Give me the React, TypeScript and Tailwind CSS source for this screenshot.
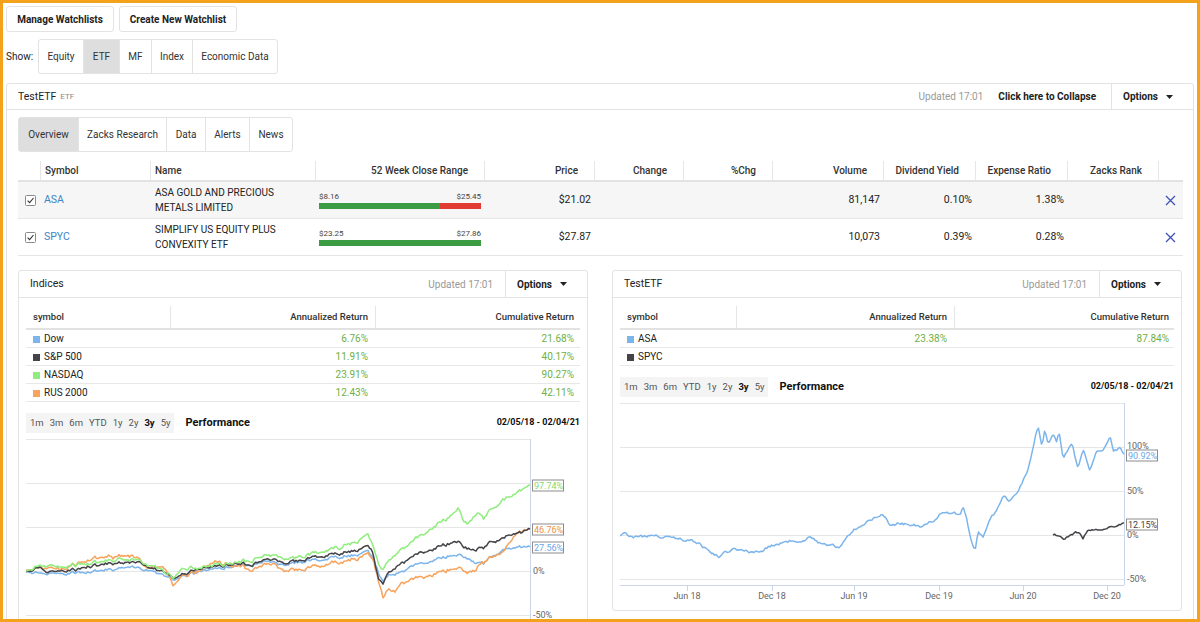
import React from 'react';

type Pt = [number, number];

const HC = { blue: '#7cb5ec', black: '#434348', green: '#90ed7d', orange: '#f7a35c' };

// deterministic noise so the chart lines look the same on every load
function makeRand(seed: number) {
  let a = seed >>> 0;
  return () => {
    a = (a + 0x6d2b79f5) >>> 0;
    let t = a;
    t = Math.imul(t ^ (t >>> 15), t | 1);
    t ^= t + Math.imul(t ^ (t >>> 7), t | 61);
    return ((t ^ (t >>> 14)) >>> 0) / 4294967296;
  };
}

function makeNoise(seed: number, n = 420) {
  const r = makeRand(seed);
  const out: number[] = [];
  let v = 0;
  for (let i = 0; i < n; i++) {
    v = v * 0.55 + (r() - 0.5) * 2;
    out.push(v);
  }
  return out;
}

function yAt(keys: Pt[], x: number) {
  for (let i = 1; i < keys.length; i++) {
    const [x0, y0] = keys[i - 1];
    const [x1, y1] = keys[i];
    if (x <= x1) return y0 + ((y1 - y0) * (x - x0)) / (x1 - x0 || 1);
  }
  return keys[keys.length - 1][1];
}

function linePath(keys: Pt[], ox: number, oy: number, noise: number[], amp: number) {
  const start = keys[0][0];
  const end = keys[keys.length - 1][0];
  const parts: string[] = [];
  let i = 0;
  for (let x = start; x < end; x += 1.5, i++) {
    const y = yAt(keys, x) + (i === 0 ? 0 : noise[i] * amp);
    parts.push(`${(x - ox).toFixed(1)},${(y - oy).toFixed(1)}`);
  }
  parts.push(`${(end - ox).toFixed(1)},${(keys[keys.length - 1][1] - oy).toFixed(1)}`);
  return 'M' + parts.join('L');
}

function mix(a: number[], b: number[], k: number) {
  return a.map((v, i) => v + b[i] * k);
}

// key points in page coordinates, taken off the screenshot
const nasdaq: Pt[] = [
  [26, 569], [40, 563], [60, 565], [100, 560], [120, 557], [140, 558], [147, 562], [155, 565], [173, 575], [180, 568],
  [200, 565], [230, 561], [250, 558], [275, 553], [285, 558], [300, 555], [340, 545], [368, 534], [372, 540],
  [378, 560], [382, 570], [387, 561], [400, 548], [417, 537], [433, 525], [447, 517], [458, 505], [463, 518],
  [468, 522], [477, 510], [483, 518], [490, 508], [503, 498], [513, 493], [523, 488], [530, 483],
];
const sp500: Pt[] = [
  [26, 570], [40, 565], [48, 571], [70, 568], [100, 563], [130, 560], [140, 560], [150, 565], [173, 575], [200, 566],
  [230, 563], [250, 562], [275, 557], [285, 562], [300, 558], [340, 551], [368, 545], [372, 548], [378, 575],
  [383, 583], [387, 573], [395, 565], [417, 553], [433, 547], [458, 538], [463, 545], [470, 548], [483, 547],
  [490, 540], [503, 536], [513, 532], [523, 530], [530, 527],
];
const dow: Pt[] = [
  [26, 570], [50, 572], [90, 570], [130, 565], [150, 568], [173, 577], [200, 569], [230, 565], [275, 560], [285, 564],
  [300, 560], [340, 555], [368, 550], [372, 553], [380, 575], [383, 580], [390, 573], [400, 570], [417, 563],
  [433, 558], [458, 552], [468, 558], [483, 562], [490, 555], [503, 548], [513, 546], [530, 545],
];
const rus: Pt[] = [
  [26, 568], [40, 565], [60, 568], [90, 557], [110, 555], [130, 554], [140, 557], [147, 565], [165, 567], [173, 582],
  [180, 575], [200, 568], [215, 560], [230, 563], [250, 567], [275, 562], [285, 570], [300, 568], [340, 560],
  [368, 553], [373, 557], [380, 585], [383, 597], [387, 590], [395, 588], [400, 582], [417, 577], [433, 572],
  [458, 565], [468, 572], [483, 562], [490, 555], [503, 550], [510, 540], [517, 532], [523, 530], [530, 527],
];

const asa: Pt[] = [
  [620, 535], [625, 532], [633, 536], [653, 535], [680, 537], [700, 543], [708, 551], [720, 555], [733, 548],
  [747, 551], [757, 551], [773, 545], [787, 540], [800, 540], [810, 537], [827, 545], [840, 545], [847, 537],
  [853, 530], [863, 523], [873, 517], [883, 513], [890, 523], [900, 522], [920, 525], [933, 520], [940, 513],
  [950, 512], [960, 513], [963, 505], [967, 520], [972, 543], [975, 552], [978, 533], [983, 537], [990, 520],
  [997, 508], [1003, 495], [1010, 500], [1018, 490], [1023, 480], [1028, 468], [1033, 445], [1038, 425],
  [1042, 445], [1045, 427], [1048, 443], [1053, 435], [1057, 443], [1059, 430], [1063, 457], [1072, 443],
  [1078, 467], [1083, 450], [1090, 470], [1097, 450], [1103, 450], [1110, 435], [1113, 450], [1120, 448], [1124, 453],
];
const spyc: Pt[] = [
  [1053, 534], [1060, 536], [1063, 538], [1072, 534], [1075, 530], [1080, 533], [1083, 537], [1087, 530],
  [1100, 528], [1110, 526], [1124, 522],
];

const market = makeNoise(11);

type Series = { color: string; d: string };
type Flag = { y: number; text: string; color: string };

const indicesSeries: Series[] = [
  { color: HC.blue, d: linePath(dow, 26, 436, mix(market, makeNoise(3), 0.35), 1.3) },
  { color: HC.orange, d: linePath(rus, 26, 436, mix(market, makeNoise(5), 0.4), 1.7) },
  { color: HC.black, d: linePath(sp500, 26, 436, mix(market, makeNoise(7), 0.35), 1.4) },
  { color: HC.green, d: linePath(nasdaq, 26, 436, mix(market, makeNoise(9), 0.4), 1.6) },
];
const etfSeries: Series[] = [
  { color: HC.blue, d: linePath(asa, 620, 401, makeNoise(21), 1.4) },
  { color: HC.black, d: linePath(spyc, 620, 401, makeNoise(23), 0.9) },
];

function PerfChart({
  series,
  flags,
  ticks,
  yLabels,
}: {
  series: Series[];
  flags: Flag[];
  ticks: [number, string][];
  yLabels: [number, string][];
}) {
  const grid = [1, 45, 89, 133, 177];
  return (
    <svg width="556" height="200" className="block mt-[5px]" fontFamily="Roboto, 'Liberation Sans', sans-serif">
      {grid.map((y) => (
        <line key={y} x1="0" x2="504" y1={y + 0.5} y2={y + 0.5} stroke="#e6e6e6" />
      ))}
      <line x1="504.5" x2="504.5" y1="1" y2="183" stroke="#ccd6eb" />
      <line x1="0" x2="504" y1="183.5" y2="183.5" stroke="#ccd6eb" />
      {ticks.map(([x, label]) => (
        <g key={label}>
          <line x1={x + 0.5} x2={x + 0.5} y1="183" y2="189" stroke="#ccd6eb" />
          <text x={x} y="197" textAnchor="middle" fontSize="9" fill="#666">
            {label}
          </text>
        </g>
      ))}
      {yLabels.map(([y, label]) => (
        <text key={label} x="507" y={y + 3} fontSize="9" fill="#666">
          {label}
        </text>
      ))}
      {series.map((s) => (
        <path key={s.color} d={s.d} fill="none" stroke={s.color} strokeWidth="1.5" strokeLinejoin="round" />
      ))}
      {flags.map((f) => (
        <g key={f.text}>
          <rect x="506.5" y={f.y - 5} width="31" height="11" fill="#fff" stroke="#8c8c8c" />
          <text x="508" y={f.y + 3.5} fontSize="9" fill={f.color}>
            {f.text}
          </text>
        </g>
      ))}
    </svg>
  );
}

function Caret() {
  return (
    <svg width="7" height="4" viewBox="0 0 7 4">
      <path d="M0 0h7L3.5 4z" fill="#222" />
    </svg>
  );
}

function Checkbox() {
  return (
    <svg width="11" height="11" viewBox="0 0 11 11">
      <rect x="0.5" y="0.5" width="10" height="10" rx="1" fill="#fff" stroke="#8a8a8a" />
      <path d="M2.6 5.6l2 2 3.9-4.6" fill="none" stroke="#333" strokeWidth="1.1" />
    </svg>
  );
}

function RemoveIcon() {
  return (
    <svg width="11" height="11" viewBox="0 0 11 11">
      <path d="M1 1l9 9M10 1l-9 9" stroke="#3f51b5" strokeWidth="1.3" />
    </svg>
  );
}

function OptionsButton() {
  return (
    <div className="h-full border-l border-[#e3e3e3] flex items-center gap-[8px] pl-[11px] pr-[20px] font-bold text-[#222]">
      Options
      <Caret />
    </div>
  );
}

const holdings = [
  { sym: 'ASA', name: ['ASA GOLD AND PRECIOUS', 'METALS LIMITED'], low: '$8.16', high: '$25.45', pct: 74.7, price: '$21.02', volume: '81,147', div: '0.10%', exp: '1.38%' },
  { sym: 'SPYC', name: ['SIMPLIFY US EQUITY PLUS', 'CONVEXITY ETF'], low: '$23.25', high: '$27.86', pct: 100, price: '$27.87', volume: '10,073', div: '0.39%', exp: '0.28%' },
];

const mainCols = 'grid grid-cols-[22px_110px_165px_169px_110px_89px_89px_111px_92px_92px_91px_25px]';
const mainHeaders = ['52 Week Close Range', 'Price', 'Change', '%Chg', 'Volume', 'Dividend Yield', 'Expense Ratio', 'Zacks Rank'];

function HoldingsTable() {
  return (
    <div className="mt-[9px] w-[1165px]">
      <div className={`${mainCols} h-[21px] border-b-2 border-[#e2e2e2] font-medium text-[#333]`}>
        <div />
        <div className="border-l border-[#e6e6e6] flex items-center pl-[4px]">Symbol</div>
        <div className="border-l border-[#e6e6e6] flex items-center pl-[4px]">Name</div>
        {mainHeaders.map((h) => (
          <div key={h} className="border-l border-[#e6e6e6] flex items-center justify-end pr-[16px]">
            {h}
          </div>
        ))}
        <div className="border-l border-[#e6e6e6]" />
      </div>
      {holdings.map((r, i) => (
        <div key={r.sym} className={`${mainCols} h-[37px] border-b border-[#e6e6e6] ${i === 0 ? 'bg-[#f6f6f6]' : 'bg-white'}`}>
          <div className="flex items-center pl-[7px]">
            <Checkbox />
          </div>
          <div className="flex items-center pl-[4px] text-[10.5px] text-[#3d85c6]">{r.sym}</div>
          <div className="flex flex-col justify-center pl-[5px] leading-[15px] text-[#222]">
            <span>{r.name[0]}</span>
            <span>{r.name[1]}</span>
          </div>
          <div className="flex flex-col justify-center pl-[4px] pr-[3px]">
            <div className="flex justify-between text-[8px] text-[#444] leading-[10px]">
              <span>{r.low}</span>
              <span>{r.high}</span>
            </div>
            <div className="h-[6px] bg-[#e03a32] flex mt-[1px]">
              <div className="h-full bg-[#3c9c44]" style={{ width: `${r.pct}%` }} />
            </div>
          </div>
          <div className="flex items-center justify-end pr-[3px] text-[10.5px] text-[#222]">{r.price}</div>
          <div />
          <div />
          <div className="flex items-center justify-end pr-[3px] text-[10.5px] text-[#222]">{r.volume}</div>
          <div className="flex items-center justify-end pr-[3px] text-[10.5px] text-[#222]">{r.div}</div>
          <div className="flex items-center justify-end pr-[3px] text-[10.5px] text-[#222]">{r.exp}</div>
          <div />
          <div className="flex items-center justify-center">
            <RemoveIcon />
          </div>
        </div>
      ))}
    </div>
  );
}

type ReturnRow = { name: string; color: string; ann?: string; cum?: string };

function RangeBar() {
  const ranges = ['1m', '3m', '6m', 'YTD', '1y', '2y', '3y', '5y'];
  return (
    <div className="h-[20px] bg-[#f4f4f4] flex items-center px-[1px] text-[9.5px] text-[#555]">
      {ranges.map((r) => (
        <span key={r} className={`px-[3px] ${r === '3y' ? 'font-bold text-[#111]' : ''}`}>
          {r}
        </span>
      ))}
    </div>
  );
}

function ReturnsPanel({
  title,
  cols,
  rows,
  series,
  flags,
  ticks,
  yLabels,
}: {
  title: string;
  cols: string;
  rows: ReturnRow[];
  series: Series[];
  flags: Flag[];
  ticks: [number, string][];
  yLabels: [number, string][];
}) {
  return (
    <div className="border border-[#e3e3e3] rounded-[3px]">
      <div className="h-[27px] border-b border-[#e3e3e3] flex items-center pl-[11px]">
        <span className="text-[10.5px] text-[#222]">{title}</span>
        <span className="ml-auto pr-[12px] text-[#999]">Updated 17:01</span>
        <OptionsButton />
      </div>
      <div className="px-[7px] pt-[8px] pb-[8px]">
        <div className={`grid ${cols} h-[24px] border-b-2 border-[#e2e2e2] text-[9.5px] font-medium text-[#333]`}>
          <div className="flex items-center pl-[7px]">symbol</div>
          <div className="border-l border-[#e6e6e6] flex items-center justify-end pr-[7px]">Annualized Return</div>
          <div className="border-l border-[#e6e6e6] flex items-center justify-end pr-[7px]">Cumulative Return</div>
        </div>
        {rows.map((r) => (
          <div key={r.name} className={`grid ${cols} h-[18px] border-b border-[#e8e8e8] text-[10px]`}>
            <div className="flex items-center pl-[7px] gap-[4px] text-[#222]">
              <span className="w-[7px] h-[7px] mt-[2px]" style={{ backgroundColor: r.color }} />
              {r.name}
            </div>
            <div className="flex items-center justify-end pr-[7px] text-[#6fb043]">{r.ann}</div>
            <div className="flex items-center justify-end pr-[7px] text-[#6fb043]">{r.cum}</div>
          </div>
        ))}
        <div className="flex items-center mt-[11px]">
          <RangeBar />
          <span className="ml-[11px] text-[11px] font-bold text-[#111]">Performance</span>
          <span className="ml-auto text-[9px] font-bold text-[#111]">02/05/18 - 02/04/21</span>
        </div>
        <PerfChart series={series} flags={flags} ticks={ticks} yLabels={yLabels} />
      </div>
    </div>
  );
}

export default function App() {
  const tabBtn = 'h-full flex items-center justify-center border-l border-[#e3e3e3] first:border-l-0';
  return (
    <div className="w-[1200px] h-[622px] overflow-hidden border-[3px] border-[#f4a11c] bg-white px-[3px] pt-[3px] text-[10px] text-[#333] font-[Roboto,'Liberation_Sans',sans-serif]">
      <div className="flex gap-[5px]">
        <button className="h-[26px] w-[108px] border border-[#e3e3e3] rounded-[3px] font-bold text-[#222]">Manage Watchlists</button>
        <button className="h-[26px] w-[118px] border border-[#e3e3e3] rounded-[3px] font-bold text-[#222]">Create New Watchlist</button>
      </div>

      <div className="mt-[7px] h-[35px] flex items-center">
        <span className="w-[32px] text-[#222]">Show:</span>
        <div className="h-full flex border border-[#e3e3e3] rounded-[3px] text-[#333]">
          <div className={`${tabBtn} w-[44px]`}>Equity</div>
          <div className={`${tabBtn} w-[36px] bg-[#dedede]`}>ETF</div>
          <div className={`${tabBtn} w-[32px]`}>MF</div>
          <div className={`${tabBtn} w-[41px]`}>Index</div>
          <div className={`${tabBtn} w-[85px]`}>Economic Data</div>
        </div>
      </div>

      <div className="mt-[9px] border border-[#e3e3e3] rounded-[3px]">
        <div className="h-[26px] border-b border-[#e3e3e3] flex items-center pl-[11px]">
          <span className="text-[10.5px] text-[#222]">TestETF</span>
          <span className="ml-[4px] text-[8px] text-[#888]">ETF</span>
          <span className="ml-auto text-[#999]">Updated 17:01</span>
          <span className="ml-[15px] mr-[15px] font-bold text-[#222]">Click here to Collapse</span>
          <OptionsButton />
        </div>

        <div className="px-[11px] pt-[7px]">
          <div className="h-[35px] inline-flex border border-[#e3e3e3] rounded-[3px] text-[#333]">
            <div className={`${tabBtn} w-[59px] bg-[#dedede]`}>Overview</div>
            <div className={`${tabBtn} w-[88px]`}>Zacks Research</div>
            <div className={`${tabBtn} w-[39px]`}>Data</div>
            <div className={`${tabBtn} w-[44px]`}>Alerts</div>
            <div className={`${tabBtn} w-[43px]`}>News</div>
          </div>

          <HoldingsTable />

          <div className="grid grid-cols-2 gap-[24px] items-start mt-[14px]">
            <ReturnsPanel
              title="Indices"
              cols="grid-cols-[144px_205px_206px]"
              rows={[
                { name: 'Dow', color: HC.blue, ann: '6.76%', cum: '21.68%' },
                { name: 'S&P 500', color: HC.black, ann: '11.91%', cum: '40.17%' },
                { name: 'NASDAQ', color: HC.green, ann: '23.91%', cum: '90.27%' },
                { name: 'RUS 2000', color: HC.orange, ann: '12.43%', cum: '42.11%' },
              ]}
              series={indicesSeries}
              ticks={[]}
              yLabels={[
                [133, '0%'],
                [177, '-50%'],
              ]}
              flags={[
                { y: 47, text: '97.74%', color: '#7fd96c' },
                { y: 91, text: '46.76%', color: '#e8913f' },
                { y: 109, text: '27.56%', color: '#6aa8e6' },
              ]}
            />
            <ReturnsPanel
              title="TestETF"
              cols="grid-cols-[116px_218px_222px]"
              rows={[
                { name: 'ASA', color: HC.blue, ann: '23.38%', cum: '87.84%' },
                { name: 'SPYC', color: HC.black },
              ]}
              series={etfSeries}
              ticks={[
                [67, 'Jun 18'],
                [152, 'Dec 18'],
                [234, 'Jun 19'],
                [319, 'Dec 19'],
                [403, 'Jun 20'],
                [487, 'Dec 20'],
              ]}
              yLabels={[
                [44, '100%'],
                [89, '50%'],
                [133, '0%'],
                [177, '-50%'],
              ]}
              flags={[
                { y: 53, text: '90.92%', color: '#6aa8e6' },
                { y: 122, text: '12.15%', color: '#434348' },
              ]}
            />
          </div>
        </div>
      </div>
    </div>
  );
}
